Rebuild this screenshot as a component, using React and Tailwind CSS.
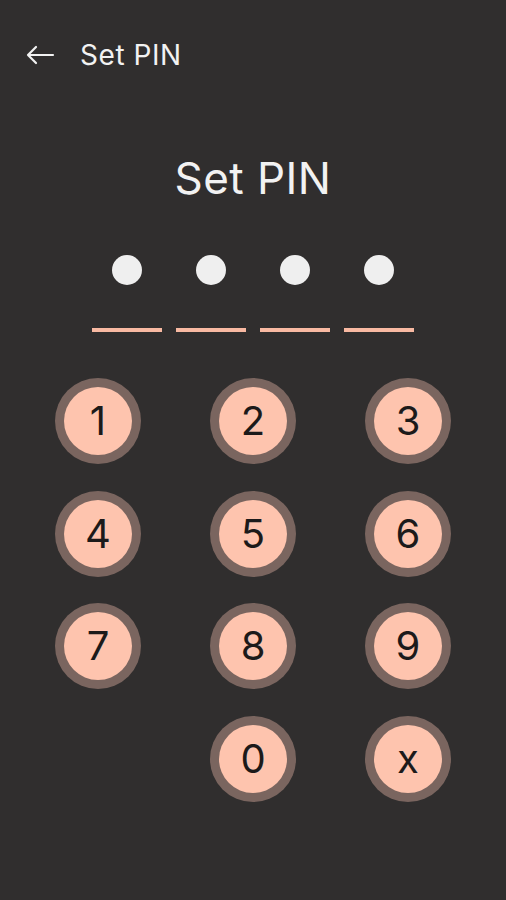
const keys = ['1', '2', '3', '4', '5', '6', '7', '8', '9', '', '0', 'x']

function Key({ label }) {
  if (!label) return <div className="h-[86px] w-[86px]" />
  return (
    <button className="flex h-[86px] w-[86px] items-center justify-center rounded-full bg-[#7a655f] p-[9px]">
      <span className="flex h-full w-full items-center justify-center rounded-full bg-[#fec4ae] text-[40px] leading-none text-[#1c1a1a]">
        {label}
      </span>
    </button>
  )
}

export default function App() {
  return (
    <div
      className="flex h-[900px] w-[506px] flex-col bg-[#302e2e] text-[#f2f2f2]"
      style={{ fontFamily: 'Inter, "Open Sans", sans-serif' }}
    >
      <header className="flex h-[110px] items-center gap-[25px] px-[25px]">
        <svg width="30" height="22" viewBox="0 0 30 22" fill="none" stroke="#f2f2f2" strokeWidth="2.2" strokeLinecap="round" strokeLinejoin="round">
          <path d="M28 11H3M11 3L3 11l8 8" />
        </svg>
        <h1 className="text-[28px] leading-none tracking-[0.02em]">Set PIN</h1>
      </header>

      <h2 className="mt-[47px] h-[42px] text-center text-[44px] leading-[42px] tracking-[0.01em]">Set PIN</h2>

      <div className="mt-[56px] flex justify-center gap-[54px]">
        {[0, 1, 2, 3].map((i) => (
          <div key={i} className="h-[30px] w-[30px] rounded-full bg-[#efefef]" />
        ))}
      </div>

      <div className="mt-[43px] flex justify-center gap-[14px]">
        {[0, 1, 2, 3].map((i) => (
          <div key={i} className="h-[4px] w-[70px] bg-[#f8b9a2]" />
        ))}
      </div>

      <div className="mx-auto mt-[46px] grid w-[465px] grid-cols-3 gap-y-[26.5px]">
        {keys.map((k, i) => (
          <div key={i} className="flex justify-center">
            <Key label={k} />
          </div>
        ))}
      </div>
    </div>
  )
}
